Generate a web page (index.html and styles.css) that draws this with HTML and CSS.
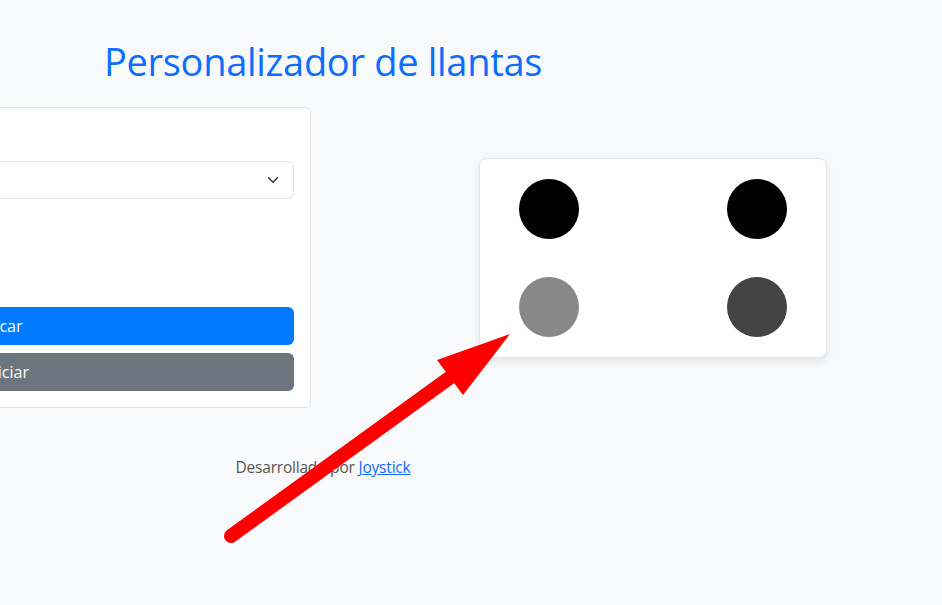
FILE: index.html
```html
<!DOCTYPE html>
<html lang="es">
<head>
  <meta charset="UTF-8" />
  <title>Personalizador de llantas</title>
  <link rel="stylesheet" href="styles.css">
</head>
<body>

  <div class="container">
    <h1 class="title">Personalizador de llantas</h1>

    <div class="row">
      <div class="col">
        <div class="card">
          <label class="label" for="modelo">Modelo de llanta</label>
          <select class="select" id="modelo">
            <option>Deportiva</option>
            <option>Clásica</option>
            <option>Todo terreno</option>
          </select>

          <label class="label" for="color">Color</label>
          <input class="color" type="color" id="color" value="#888888" />

          <button class="btn btn-primary">Aplicar</button>
          <button class="btn btn-secondary">Reiniciar</button>
        </div>
      </div>

      <div class="col">
        <div class="preview">
          <div class="wheel" style="background: #000000;"></div>
          <div class="wheel" style="background: #000000;"></div>
          <div class="wheel" style="background: #888888;"></div>
          <div class="wheel" style="background: #444444;"></div>
        </div>
      </div>
    </div>

    <p class="footer">Desarrollado por <a href="#">Joystick</a></p>
  </div>

  <svg class="arrow" width="942" height="605" viewBox="0 0 942 605">
    <line x1="231" y1="536" x2="470" y2="363" stroke="#ff0000" stroke-width="14" stroke-linecap="round" />
    <polygon points="510,334 437,360 463,395" fill="#ff0000" />
  </svg>

</body>
</html>
```

FILE: styles.css
```css
html, body {
  overflow: hidden;
}

body {
  margin: 0;
  background: #f8f9fa;
  font-family: "Open Sans", "Noto Sans", sans-serif;
  font-size: 16px;
  line-height: 24px;
  color: #212529;
  position: relative;
  height: 605px;
}

.container {
  box-sizing: border-box;
  width: 1320px;
  margin-left: -337px;
  padding: 0 12px;
}

.title {
  margin: 37px 0 0;
  text-align: center;
  font-size: 38px;
  line-height: 48px;
  font-weight: 400;
  letter-spacing: -0.3px;
  color: #0d6efd;
}

.row {
  display: flex;
  align-items: center;
  margin: 22px -12px 0;
}

.col {
  flex: 1;
  padding: 0 12px;
}

.card {
  background: white;
  border: 1px solid #dee2e6;
  border-radius: 6px;
  padding: 16px;
}

.label {
  display: block;
  margin-bottom: 13px;
}

.select {
  display: block;
  box-sizing: border-box;
  width: 100%;
  height: 38px;
  margin-bottom: 16px;
  padding: 6px 36px 6px 12px;
  font: inherit;
  color: #212529;
  background: white url("data:image/svg+xml,%3csvg xmlns='http://www.w3.org/2000/svg' viewBox='0 0 16 16'%3e%3cpath fill='none' stroke='%23343a40' stroke-linecap='round' stroke-linejoin='round' stroke-width='2' d='m2 5 6 6 6-6'/%3e%3c/svg%3e") no-repeat right 12px center / 16px 12px;
  border: 1px solid #dee2e6;
  border-radius: 6px;
  appearance: none;
}

.color {
  display: block;
  width: 48px;
  height: 38px;
  margin: -5px 0 22px;
}

.btn {
  display: block;
  width: 100%;
  height: 38px;
  padding: 0 0 0 8px;
  font: inherit;
  color: white;
  border: none;
  border-radius: 6px;
  cursor: pointer;
}

.btn-primary {
  background: #007bff;
  margin-bottom: 8px;
}

.btn-secondary {
  background: #6c757d;
}

.preview {
  box-sizing: border-box;
  width: 348px;
  margin: 0 auto;
  padding: 20px 39px;
  display: grid;
  grid-template-columns: 60px 60px;
  justify-content: space-between;
  row-gap: 38px;
  background: white;
  border: 1px solid #e3e6ea;
  border-radius: 8px;
  box-shadow: 0 4px 8px rgba(0,0,0,0.08);
}

.wheel {
  width: 60px;
  height: 60px;
  border-radius: 50%;
}

.footer {
  margin: 47px 0 0;
  text-align: center;
  color: #555;
  font-size: 15.5px;
  letter-spacing: -0.2px;
}

.footer a {
  color: #0d6efd;
}

.arrow {
  position: absolute;
  top: 0;
  left: 0;
  pointer-events: none;
}
```
